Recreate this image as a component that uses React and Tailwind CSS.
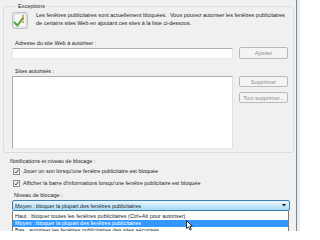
import React from 'react'

function BlockIcon() {
  return (
    <svg width="16" height="17" viewBox="0 0 16 17">
      <rect x="0.5" y="0.5" width="15" height="16" rx="2" fill="#e9ecee" stroke="#b9c0c6" />
      <rect x="2" y="2" width="12" height="13" rx="1" fill="#f8f9fa" stroke="#d3d8dc" />
      <rect x="10" y="3" width="2" height="5" fill="#e8a33a" />
      <rect x="10" y="9" width="2" height="2" fill="#e8a33a" />
      <path d="M2.5 10.5 L5.5 13.5 L10.5 6.5" fill="none" stroke="#4aa83a" strokeWidth="2" strokeLinecap="round" />
    </svg>
  )
}

function Check() {
  return (
    <div className="w-[7px] h-[7px] border border-[#8e8f8f] bg-gradient-to-b from-[#e6e6e6] to-[#fbfbfb] flex items-center justify-center">
      <svg width="5" height="5" viewBox="0 0 5 5">
        <path d="M0.6 2.6 L2 4 L4.4 0.8" fill="none" stroke="#3c4f6b" strokeWidth="1" />
      </svg>
    </div>
  )
}

function Btn({ children, className = '' }) {
  return (
    <div className={`w-[49px] border border-[#b7babc] rounded-[2px] bg-[#f4f4f4] text-[#8d8d8d] flex items-center justify-center ${className}`}>
      {children}
    </div>
  )
}

export default function App() {
  return (
    <div
      className="w-[300px] h-[231px] overflow-hidden bg-[#f0f0f0] flex text-[5.5px] leading-[8px] text-[#1e1e1e]"
      style={{ fontFamily: '"Liberation Sans", Arial, sans-serif' }}
    >
      <div className="w-[296px] pl-[3px]">
        {/* Exceptions */}
        <fieldset className="mt-[2px] w-[291px] border border-[#d5dfe5] rounded-[3px] pl-[8px] pr-[5px] pb-[3px]">
          <legend className="ml-[4px] px-[2px] text-[#1e1e1e]">Exceptions</legend>
          <div className="flex gap-[8px] pt-[2px]">
            <BlockIcon />
            <p className="-mt-[1px]">
              Les fenêtres publicitaires sont actuellement bloquées.&nbsp; Vous pouvez autoriser les fenêtres publicitaires<br />
              de certains sites Web en ajoutant ces sites à la liste ci-dessous.
            </p>
          </div>
          <div className="mt-[10px] pl-[3px]">Adresse du site Web à autoriser :</div>
          <div className="flex items-center gap-[6px]">
            <div className="flex-1 h-[11px] bg-white border border-[#e3e9ef] border-t-[#abadb3]" />
            <Btn className="h-[12px]">Ajouter</Btn>
          </div>
          <div className="mt-[8px] pl-[3px]">Sites autorisés :</div>
          <div className="flex gap-[6px] mt-[1px]">
            <div className="flex-1 h-[73px] bg-white border border-[#abadb3] border-r-[#dbdfe6] border-b-[#e3e9ef]" />
            <div className="flex flex-col gap-[5px]">
              <Btn className="h-[11px]">Supprimer</Btn>
              <Btn className="h-[11px]">Tout supprimer...</Btn>
            </div>
          </div>
        </fieldset>

        {/* Notifications */}
        <div className="mt-[4px] pl-[7px]">Notifications et niveau de blocage :</div>
        <div className="pl-[10px] flex items-center gap-[3px] h-[12px]">
          <Check />
          <span>Jouer un son lorsqu'une fenêtre publicitaire est bloquée</span>
        </div>
        <div className="pl-[10px] flex items-center gap-[3px] h-[12px]">
          <Check />
          <span>Afficher la barre d'informations lorsqu'une fenêtre publicitaire est bloquée</span>
        </div>
        <div className="mt-[2px] pl-[11px]">Niveau de blocage :</div>
        <div className="relative ml-[9px] w-[278px] mt-[1px]">
          <div className="h-[11px] border border-[#3c7fb1] rounded-[2px] bg-gradient-to-b from-[#eaf6fd] to-[#a7d9f5] flex items-center justify-between pl-[2px] pr-[3px]">
            <span>Moyen : bloquer la plupart des fenêtres publicitaires</span>
            <svg width="4" height="3" viewBox="0 0 4 3">
              <path d="M0 0 H4 L2 2.5 Z" fill="#1e1e1e" />
            </svg>
          </div>
          <div className="absolute top-[11px] left-0 w-[277px] bg-white border border-[#7a7a7a] border-t-0 leading-[7px] pt-[2px]">
            <div className="pl-[2px] h-[7px]">Haut : bloquer toutes les fenêtres publicitaires (Ctrl+Alt pour autoriser)</div>
            <div className="pl-[2px] h-[7px] bg-[#3399ff] text-white">Moyen : bloquer la plupart des fenêtres publicitaires</div>
            <div className="pl-[2px] h-[7px]">Bas : autoriser les fenêtres publicitaires des sites sécurisés</div>
          </div>
          <svg className="absolute left-[174px] top-[20px]" width="7" height="11" viewBox="0 0 7 11">
            <path d="M0.5 0.5 V8.5 L2.5 6.8 L4 10 L5.3 9.4 L3.9 6.3 L6.3 6.3 Z" fill="#fff" stroke="#000" strokeWidth="0.8" />
          </svg>
        </div>
      </div>
      <div className="w-[4px] h-full border-l border-[#7b8896] bg-[#e6edf3]" />
    </div>
  )
}
